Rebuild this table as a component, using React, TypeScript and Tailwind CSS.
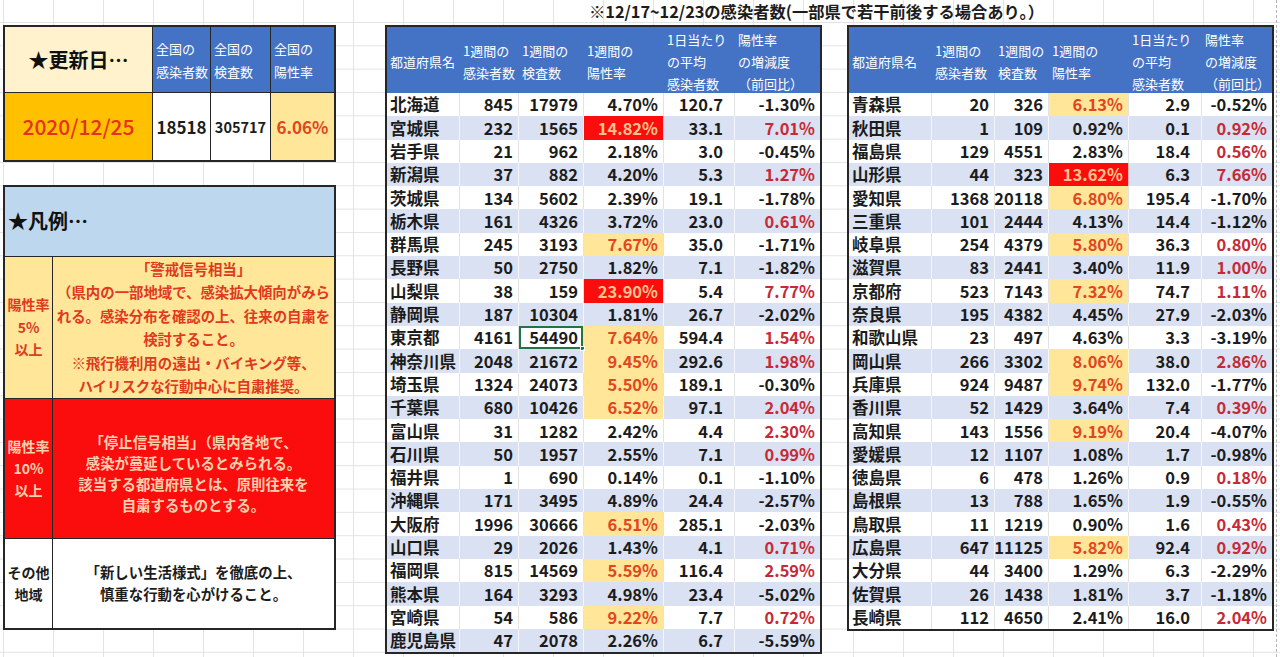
type Row = [string, string, string, string, string, string];

const middleRows: Row[] = [
  ["北海道", "845", "17979", "4.70%", "120.7", "-1.30%"],
  ["宮城県", "232", "1565", "14.82%", "33.1", "7.01%"],
  ["岩手県", "21", "962", "2.18%", "3.0", "-0.45%"],
  ["新潟県", "37", "882", "4.20%", "5.3", "1.27%"],
  ["茨城県", "134", "5602", "2.39%", "19.1", "-1.78%"],
  ["栃木県", "161", "4326", "3.72%", "23.0", "0.61%"],
  ["群馬県", "245", "3193", "7.67%", "35.0", "-1.71%"],
  ["長野県", "50", "2750", "1.82%", "7.1", "-1.82%"],
  ["山梨県", "38", "159", "23.90%", "5.4", "7.77%"],
  ["静岡県", "187", "10304", "1.81%", "26.7", "-2.02%"],
  ["東京都", "4161", "54490", "7.64%", "594.4", "1.54%"],
  ["神奈川県", "2048", "21672", "9.45%", "292.6", "1.98%"],
  ["埼玉県", "1324", "24073", "5.50%", "189.1", "-0.30%"],
  ["千葉県", "680", "10426", "6.52%", "97.1", "2.04%"],
  ["富山県", "31", "1282", "2.42%", "4.4", "2.30%"],
  ["石川県", "50", "1957", "2.55%", "7.1", "0.99%"],
  ["福井県", "1", "690", "0.14%", "0.1", "-1.10%"],
  ["沖縄県", "171", "3495", "4.89%", "24.4", "-2.57%"],
  ["大阪府", "1996", "30666", "6.51%", "285.1", "-2.03%"],
  ["山口県", "29", "2026", "1.43%", "4.1", "0.71%"],
  ["福岡県", "815", "14569", "5.59%", "116.4", "2.59%"],
  ["熊本県", "164", "3293", "4.98%", "23.4", "-5.02%"],
  ["宮崎県", "54", "586", "9.22%", "7.7", "0.72%"],
  ["鹿児島県", "47", "2078", "2.26%", "6.7", "-5.59%"],
];

const rightRows: Row[] = [
  ["青森県", "20", "326", "6.13%", "2.9", "-0.52%"],
  ["秋田県", "1", "109", "0.92%", "0.1", "0.92%"],
  ["福島県", "129", "4551", "2.83%", "18.4", "0.56%"],
  ["山形県", "44", "323", "13.62%", "6.3", "7.66%"],
  ["愛知県", "1368", "20118", "6.80%", "195.4", "-1.70%"],
  ["三重県", "101", "2444", "4.13%", "14.4", "-1.12%"],
  ["岐阜県", "254", "4379", "5.80%", "36.3", "0.80%"],
  ["滋賀県", "83", "2441", "3.40%", "11.9", "1.00%"],
  ["京都府", "523", "7143", "7.32%", "74.7", "1.11%"],
  ["奈良県", "195", "4382", "4.45%", "27.9", "-2.03%"],
  ["和歌山県", "23", "497", "4.63%", "3.3", "-3.19%"],
  ["岡山県", "266", "3302", "8.06%", "38.0", "2.86%"],
  ["兵庫県", "924", "9487", "9.74%", "132.0", "-1.77%"],
  ["香川県", "52", "1429", "3.64%", "7.4", "0.39%"],
  ["高知県", "143", "1556", "9.19%", "20.4", "-4.07%"],
  ["愛媛県", "12", "1107", "1.08%", "1.7", "-0.98%"],
  ["徳島県", "6", "478", "1.26%", "0.9", "0.18%"],
  ["島根県", "13", "788", "1.65%", "1.9", "-0.55%"],
  ["鳥取県", "11", "1219", "0.90%", "1.6", "0.43%"],
  ["広島県", "647", "11125", "5.82%", "92.4", "0.92%"],
  ["大分県", "44", "3400", "1.29%", "6.3", "-2.29%"],
  ["佐賀県", "26", "1438", "1.81%", "3.7", "-1.18%"],
  ["長崎県", "112", "4650", "2.41%", "16.0", "2.04%"],
];

const headers = [
  ["都道府県名"],
  ["1週間の", "感染者数"],
  ["1週間の", "検査数"],
  ["1週間の", "陽性率"],
  ["1日当たり", "の平均", "感染者数"],
  ["陽性率", "の増減度", "（前回比）"],
];

function DataTable({ rows, cols, width, active }: { rows: Row[]; cols: string; width: string; active?: number }) {
  return (
    <div className={`${width} border-2 border-[#262626]`}>
      {/* header */}
      <div className={`grid ${cols} h-[66px] bg-[#4472c4] text-white text-[13px] leading-[22px]`}>
        {headers.map((h, i) => (
          <div key={i} className="flex items-center pl-[3px] pt-[2px] whitespace-nowrap">
            <div>
              {h.map((line) => (
                <div key={line}>{line}</div>
              ))}
            </div>
          </div>
        ))}
      </div>

      {rows.map((r, i) => {
        const shaded = i % 2 === 1;
        const line = shaded ? "border-white/70" : "border-[#e2e2e2]";
        const rate = parseFloat(r[3]);
        const rateCls =
          rate >= 10 ? "bg-[#fb0d0d] text-[#fcc48b]" : rate >= 5 ? "bg-[#ffe699] text-[#e1461f]" : "";
        const up = !r[5].startsWith("-");
        return (
          <div
            key={r[0]}
            className={`grid ${cols} h-[23.3px] ${shaded ? "bg-[#d9e1f2]" : "bg-white"} text-[16.5px] font-semibold leading-none text-[#1c1c1c]`}
          >
            <div className={`flex items-center pl-[3px] whitespace-nowrap border-r ${line}`}>{r[0]}</div>
            <div className={`flex items-center justify-end pr-[5px] border-r ${line}`}>{r[1]}</div>
            <div className={`relative flex items-center justify-end pr-[5px] border-r ${line}`}>
              {r[2]}
              {active === i && (
                <span className="absolute inset-0 border-2 border-[#227447]">
                  <span className="absolute -right-[4px] -bottom-[4px] w-[5px] h-[5px] bg-[#227447] border border-white" />
                </span>
              )}
            </div>
            <div className={`flex items-center justify-end pr-[5px] border-r ${line} ${rateCls}`}>{r[3]}</div>
            <div className={`flex items-center justify-end pr-[11px] border-r ${line}`}>{r[4]}</div>
            <div className={`flex items-center justify-end pr-[5px] ${up ? "text-[#c62a36]" : ""}`}>{r[5]}</div>
          </div>
        );
      })}
    </div>
  );
}

function TopBox() {
  const blue = "flex items-center pl-[3px] bg-[#4472c4] text-white text-[13px] leading-[23px] border-l-[1.5px] border-[#262626] whitespace-nowrap";
  return (
    <div className="w-[333px] border-2 border-[#262626]">
      <div className="grid grid-cols-[147px_58px_60px_64px] h-[65px]">
        <div className="flex items-center justify-center bg-[#fff2cc] text-[20px] font-bold text-[#111]">★更新日…</div>
        <div className={blue}>
          <div>
            <div>全国の</div>
            <div>感染者数</div>
          </div>
        </div>
        <div className={blue}>
          <div>
            <div>全国の</div>
            <div>検査数</div>
          </div>
        </div>
        <div className={blue}>
          <div>
            <div>全国の</div>
            <div>陽性率</div>
          </div>
        </div>
      </div>
      <div className="grid grid-cols-[147px_58px_60px_64px] h-[68px] border-t-[1.5px] border-[#262626]">
        <div className="flex items-center justify-center bg-[#ffc000] text-[21px] font-medium text-[#e5321e]">
          2020/12/25
        </div>
        <div className="flex items-center justify-center bg-white text-[17px] font-semibold text-[#1c1c1c] border-l-[1.5px] border-[#262626]">
          18518
        </div>
        <div className="flex items-center justify-center bg-white text-[14.5px] font-semibold text-[#1c1c1c] border-l-[1.5px] border-[#262626]">
          305717
        </div>
        <div className="flex items-center justify-center bg-[#ffe699] text-[17px] font-semibold text-[#e1461f] border-l-[1.5px] border-[#262626]">
          6.06%
        </div>
      </div>
    </div>
  );
}

function Legend() {
  return (
    <div className="mt-[23px] w-[333px] border-2 border-[#262626] font-bold">
      <div className="h-[69.5px] flex items-center pl-[3px] bg-[#bdd7ee] text-[20px] text-[#111] border-b-[1.5px] border-[#262626]">
        ★凡例…
      </div>

      <div className="grid grid-cols-[48px_1fr] h-[142px] bg-[#ffe699] text-[#e0391e] border-b-[1.5px] border-[#262626]">
        <div className="flex flex-col items-center justify-center text-[14px] leading-[22.5px] border-r-[1.5px] border-[#262626]">
          <span>陽性率</span>
          <span>5%</span>
          <span>以上</span>
        </div>
        <div className="flex flex-col items-center justify-center text-[14.4px] leading-[23.5px] whitespace-nowrap">
          <span>「警戒信号相当」</span>
          <span>（県内の一部地域で、感染拡大傾向がみら</span>
          <span>れる。感染分布を確認の上、往来の自粛を</span>
          <span>検討すること。</span>
          <span>※飛行機利用の遠出・バイキング等、</span>
          <span>ハイリスクな行動中心に自粛推奨。</span>
        </div>
      </div>

      <div className="grid grid-cols-[48px_1fr] h-[140px] bg-[#fb0d0d] text-[#fbd0ae] border-b-[1.5px] border-[#262626]">
        <div className="flex flex-col items-center justify-center text-[14px] leading-[22px] border-r-[1.5px] border-[#262626]">
          <span>陽性率</span>
          <span>10%</span>
          <span>以上</span>
        </div>
        <div className="flex flex-col items-center justify-center pt-[10px] text-[14.4px] leading-[21px] whitespace-nowrap">
          <span>「停止信号相当」（県内各地で、</span>
          <span>感染が蔓延しているとみられる。</span>
          <span>該当する都道府県とは、原則往来を</span>
          <span>自粛するものとする。</span>
        </div>
      </div>

      <div className="grid grid-cols-[48px_1fr] h-[89.5px] bg-white text-[#1c1c1c]">
        <div className="flex flex-col items-center justify-center text-[14px] leading-[22px] border-r-[1.5px] border-[#262626]">
          <span>その他</span>
          <span>地域</span>
        </div>
        <div className="flex flex-col items-center justify-center text-[14.4px] leading-[22px] font-semibold whitespace-nowrap">
          <span>「新しい生活様式」を徹底の上、</span>
          <span>慎重な行動を心がけること。</span>
        </div>
      </div>
    </div>
  );
}

export default function App() {
  return (
    <div className="w-[1280px] h-[657px] overflow-hidden flex bg-white bg-[linear-gradient(to_right,#e3e3e3_1px,transparent_1px),linear-gradient(to_bottom,#e3e3e3_1px,transparent_1px)] bg-size-[50px_23.33px] bg-position-[3px_22px] font-['Noto_Sans_CJK_JP',sans-serif] text-[#1c1c1c]">
      {/* Left: update date + legend */}
      <div className="w-[385px] shrink-0 pl-[3px] pt-[25px]">
        <TopBox />
        <Legend />
      </div>

      {/* Right: weekly tables */}
      <div className="flex flex-col shrink-0">
        <div className="h-[25px] flex items-center pl-[204px] pb-[2px] text-[16.3px] font-semibold whitespace-nowrap text-[#1c1c1c]">
          ※12/17~12/23の感染者数(一部県で若干前後する場合あり。）
        </div>
        <div className="flex items-start gap-[25px]">
          <DataTable
            rows={middleRows}
            cols="grid-cols-[73px_59px_65px_80px_71px_85px]"
            width="w-[437px]"
            active={10}
          />
          <DataTable rows={rightRows} cols="grid-cols-[83px_63px_54px_80px_73px_70px]" width="w-[427px]" />
        </div>
      </div>

      <div className="ml-[2px] w-0 self-stretch border-l border-dashed border-[#b5b5b5]" />
    </div>
  );
}
